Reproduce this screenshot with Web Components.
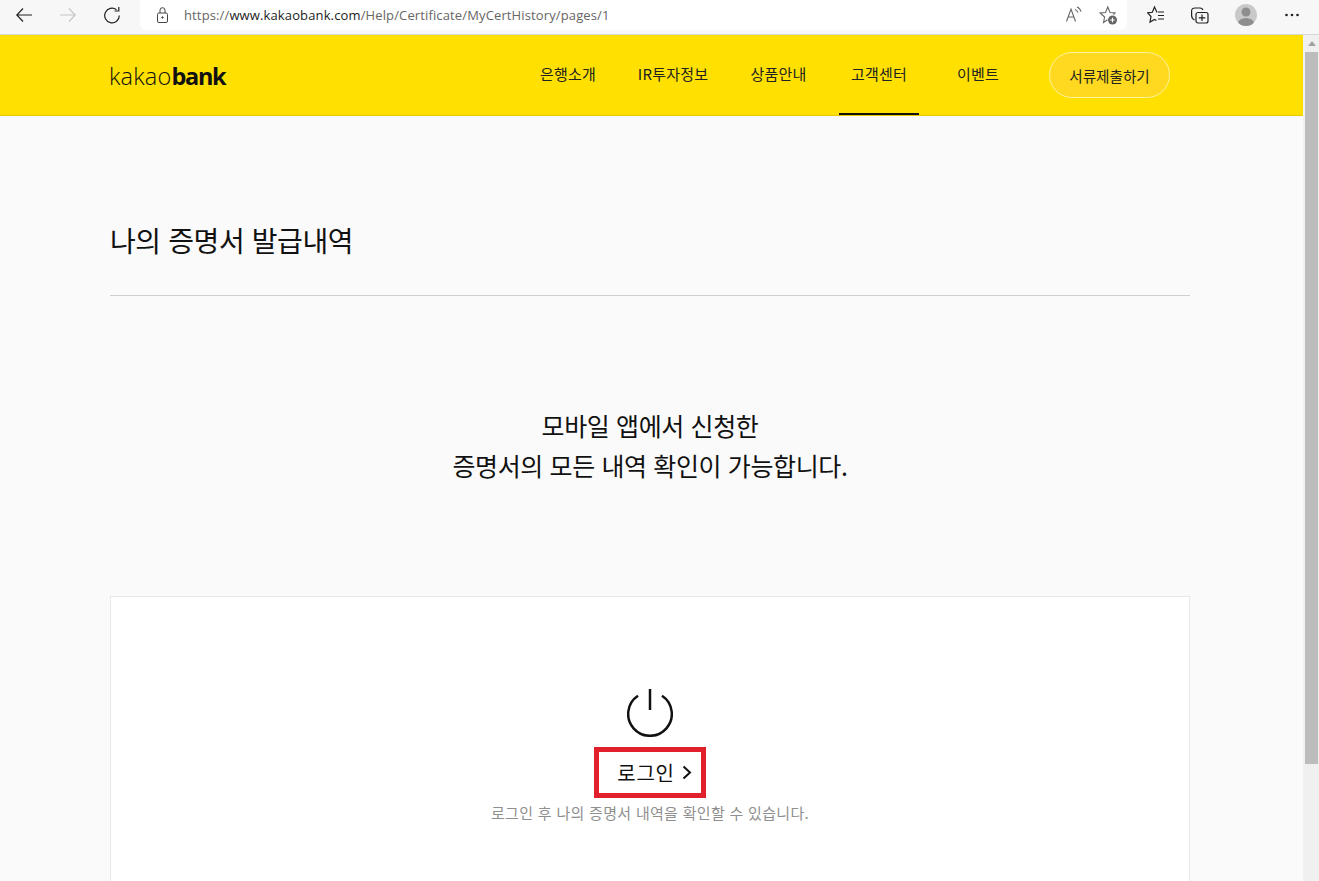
<!DOCTYPE html>
<html lang="ko">
<head>
<meta charset="utf-8">
<title>나의 증명서 발급내역</title>
<style>
  html, body {
    margin: 0;
    height: 100%;
    overflow: hidden;
    font-family: "Noto Sans CJK KR", "Noto Sans", sans-serif;
  }
  body {
    display: flex;
    flex-direction: column;
    background: #fafafa;
  }
</style>
</head>
<body>
  <browser-bar url-host="www.kakaobank.com" url-path="/Help/Certificate/MyCertHistory/pages/1"></browser-bar>
  <page-frame>
    <site-header>
      <nav-link width="56" gap="42">은행소개</nav-link>
      <nav-link width="70" gap="42">IR투자정보</nav-link>
      <nav-link width="57" gap="32">상품안내</nav-link>
      <nav-link width="80" gap="38" active>고객센터</nav-link>
      <nav-link width="42" gap="50">이벤트</nav-link>
    </site-header>
    <page-title>나의 증명서 발급내역</page-title>
    <intro-text>
      <div>모바일 앱에서 신청한</div>
      <div>증명서의 모든 내역 확인이 가능합니다.</div>
    </intro-text>
    <login-card>로그인 후 나의 증명서 내역을 확인할 수 있습니다.</login-card>
  </page-frame>

<script>
class BrowserBar extends HTMLElement {
  constructor() {
    super();
    this.attachShadow({ mode: "open" });
  }

  connectedCallback() {
    const host = this.getAttribute("url-host") || "";
    const path = this.getAttribute("url-path") || "";

    this.shadowRoot.innerHTML = `
      <style>
        :host {
          display: flex;
          align-items: flex-start;
          flex: none;
          height: 34px;
          background: #f7f7f7;
          border-bottom: 1px solid #d6d6d6;
          font-family: "Open Sans", "Noto Sans", sans-serif;
        }
        svg { display: block; flex: none; fill: none; stroke: #222; stroke-width: 1.2; }
        .nav {
          display: flex;
          align-items: center;
          gap: 28px;
          box-sizing: border-box;
          width: 140px;
          height: 30px;
          padding-left: 16px;
        }
        .address {
          display: flex;
          align-items: center;
          box-sizing: border-box;
          width: 987px;
          height: 30px;
          padding: 0 8px 0 17px;
          background: #fff;
          border-radius: 0 0 6px 6px;
          font-size: 13px;
          color: #666;
        }
        .url { margin-left: 16px; white-space: nowrap; flex: 1; letter-spacing: .13px; }
        .url b { font-weight: 400; color: #1c1c1c; }
        .star-add { margin-left: 17px; }
        .tools {
          display: flex;
          align-items: center;
          gap: 26px;
          height: 30px;
          padding-left: 20px;
        }
        .avatar {
          width: 22px;
          height: 22px;
          border-radius: 50%;
          background: #c9c9c9;
          overflow: hidden;
        }
        .avatar svg { fill: #8e8e8e; stroke: none; }
        .more { fill: #222; stroke: none; margin-left: 1px; }
      </style>
      <div class="nav">
        <svg width="16" height="14" viewBox="0 0 16 14"><path d="M16 7H.8M7 .5.8 7 7 13.5"/></svg>
        <svg width="16" height="14" viewBox="0 0 16 14" style="stroke:#c6c6c6"><path d="M0 7h15.200M9 .5 15.200 7 9 13.500"/></svg>
        <svg width="16" height="18" viewBox="0 0 16 18"><path d="M15.300 9.500a7.300 7.300 0 1 1-2.800-5.700"/><path d="M14.800 1v4h-4.200"/></svg>
      </div>
      <div class="address">
        <svg width="11" height="16" viewBox="0 0 11 16" style="stroke:#444;stroke-width:1"><rect x=".5" y="6" width="10" height="9.500" rx="1.500"/><path d="M3 6V3.200a2.500 2.500 0 0 1 5 0V6"/><circle cx="5.500" cy="10.500" r=".7" fill="#444"/></svg>
        <span class="url">https://<b>${host}</b>${path}</span>
        <svg width="16" height="18" viewBox="0 0 16 18" style="stroke:#666;stroke-width:1.100"><path d="M.5 15.500 5 3l4.500 12.500M2.200 11h5.600"/><path d="M9 3.500c1.500.6 2.500 1.600 3 3.200M11 1c2 .8 3.500 2.400 4 4.700"/></svg>
        <svg class="star-add" width="20" height="20" viewBox="0 0 20 20" style="stroke:#666;stroke-width:1.100"><path d="M8.500 14.800 4.500 17.500 5.600 12 1.200 8l5.300-.5L8.800 2 11 7.500l5 .5-1.500 1.500"/><circle cx="13.500" cy="15" r="4.500" fill="#666" stroke="none"/><path d="M13.500 12.800v4.400M11.300 15h4.400" stroke="#fff"/></svg>
      </div>
      <div class="tools">
        <svg width="18" height="20" viewBox="0 0 18 20"><path d="M10 7.500 7.500 2 5.300 7.300.6 7.800 4 11.500 3 17l4.500-2.500 2 1"/><path d="M11 7h6M11 10.500h6M11 14h6"/></svg>
        <svg width="18" height="20" viewBox="0 0 18 20"><path d="M3.500 15C1.500 14 .6 12.500.6 10.500V6C.6 4 2 3 4 3h5c1.500 0 2.500.8 3 2"/><rect x="5" y="7.500" width="12" height="10.500" rx="2"/><path d="M11 9.500v6.500M7.800 12.800h6.400"/></svg>
        <div class="avatar">
          <svg width="22" height="22" viewBox="0 0 22 22"><circle cx="11" cy="8" r="4.500"/><ellipse cx="11" cy="19.500" rx="8" ry="5.500"/></svg>
        </div>
        <svg class="more" width="16" height="16" viewBox="0 0 16 16"><circle cx="2.500" cy="8" r="1.300"/><circle cx="8" cy="8" r="1.300"/><circle cx="13.500" cy="8" r="1.300"/></svg>
      </div>
    `;
  }
}

class PageFrame extends HTMLElement {
  constructor() {
    super();
    this.attachShadow({ mode: "open" });
    this.shadowRoot.innerHTML = `
      <style>
        :host {
          display: flex;
          flex: 1;
          min-height: 0;
          overflow: hidden;
        }
        .content { flex: 1; min-width: 0; }
        .track {
          flex: none;
          width: 16px;
          box-sizing: border-box;
          padding: 0 1px 0 2px;
          background: #f0f0f0;
        }
        .arrow {
          height: 17px;
          display: flex;
          align-items: center;
          justify-content: center;
        }
        .arrow i {
          border: 4px solid transparent;
          border-top: 0;
          border-bottom: 5px solid #a3a3a3;
        }
        .thumb { height: 712px; background: #bcbcbc; }
      </style>
      <div class="content"><slot></slot></div>
      <div class="track">
        <div class="arrow"><i></i></div>
        <div class="thumb"></div>
      </div>
    `;
  }
}

class SiteHeader extends HTMLElement {
  constructor() {
    super();
    this.attachShadow({ mode: "open" });
    this.shadowRoot.innerHTML = `
      <style>
        :host {
          display: flex;
          align-items: center;
          height: 80px;
          padding-left: 110px;
          padding-right: 133px;
          background: #ffe000;
          border-bottom: 1px solid #e6ca00;
        }
        .logo {
          font-family: "Open Sans", "Noto Sans", sans-serif;
          font-size: 23.5px;
          line-height: 24px;
          font-weight: 300;
          letter-spacing: .2px;
          color: #111;
          margin-top: 2px;
          margin-left: -1px;
          margin-right: auto;
        }
        .logo b { font-weight: 700; letter-spacing: -1.3px; }
        nav { display: flex; height: 100%; }
        button {
          flex: none;
          width: 121px;
          height: 46px;
          padding: 0;
          border: 1px solid #fff3a0;
          border-radius: 23px;
          background: #ffd91f;
          color: #222;
          font: 14.6px "Noto Sans CJK KR", sans-serif;
        }
      </style>
      <div class="logo">kakao<b>bank</b></div>
      <nav><slot></slot></nav>
      <button type="button">서류제출하기</button>
    `;
  }
}

class NavLink extends HTMLElement {
  constructor() {
    super();
    this.attachShadow({ mode: "open" });
    this.shadowRoot.innerHTML = `
      <style>
        :host {
          display: flex;
          justify-content: center;
          box-sizing: border-box;
          height: 80px;
          padding-top: 29px;
          font-size: 15px;
          line-height: 20px;
          letter-spacing: .2px;
          color: #222;
          white-space: nowrap;
        }
        :host([active]) { border-bottom: 2px solid #111; }
      </style>
      <slot></slot>
    `;
  }

  connectedCallback() {
    this.style.width = `${this.getAttribute("width")}px`;
    this.style.marginRight = `${this.getAttribute("gap")}px`;
  }
}

class PageTitle extends HTMLElement {
  constructor() {
    super();
    this.attachShadow({ mode: "open" });
    this.shadowRoot.innerHTML = `
      <style>
        :host {
          display: block;
          margin: 0 113px 0 110px;
          padding-top: 101px;
          height: 78px;
          border-bottom: 1px solid #cfcfcf;
          font-size: 28px;
          line-height: 46px;
          font-weight: 400;
          letter-spacing: -.4px;
          color: #111;
        }
      </style>
      <slot></slot>
    `;
  }
}

class IntroText extends HTMLElement {
  constructor() {
    super();
    this.attachShadow({ mode: "open" });
    this.shadowRoot.innerHTML = `
      <style>
        :host {
          display: block;
          padding: 109px 3px 0 0;
          height: 191px;
          text-align: center;
          font-size: 25px;
          line-height: 40px;
          letter-spacing: -.38px;
          color: #111;
        }
      </style>
      <slot></slot>
    `;
  }
}

class LoginCard extends HTMLElement {
  constructor() {
    super();
    this.attachShadow({ mode: "open" });
    this.shadowRoot.innerHTML = `
      <style>
        :host {
          display: flex;
          flex-direction: column;
          align-items: center;
          box-sizing: border-box;
          height: 320px;
          margin: 0 113px 0 110px;
          padding-top: 92px;
          background: #fff;
          border: 1px solid #e8e8e8;
        }
        svg { display: block; flex: none; fill: none; stroke: #111; stroke-width: 2.500; }
        .login {
          display: flex;
          align-items: center;
          justify-content: center;
          gap: 7px;
          box-sizing: border-box;
          width: 112px;
          height: 51px;
          margin-top: 9.500px;
          padding-left: 9px;
          border: 5px solid #e2202c;
          font-size: 20px;
          letter-spacing: .8px;
          color: #111;
        }
        .login svg { stroke-width: 2; }
        .note {
          margin-top: 5px;
          font-size: 15px;
          line-height: 20px;
          letter-spacing: .3px;
          color: #8f8f8f;
        }
      </style>
      <svg width="46" height="48" viewBox="0 0 46 48"><path d="M11 6.800a21.800 21.800 0 1 0 24 0"/><path d="M23 0v21"/></svg>
      <div class="login">로그인<svg width="10" height="15" viewBox="0 0 10 15"><path d="m1.500 1.500 6.500 6-6.500 6"/></svg></div>
      <div class="note"><slot></slot></div>
    `;
  }
}

customElements.define("browser-bar", BrowserBar);
customElements.define("page-frame", PageFrame);
customElements.define("site-header", SiteHeader);
customElements.define("nav-link", NavLink);
customElements.define("page-title", PageTitle);
customElements.define("intro-text", IntroText);
customElements.define("login-card", LoginCard);
</script>
</body>
</html>
